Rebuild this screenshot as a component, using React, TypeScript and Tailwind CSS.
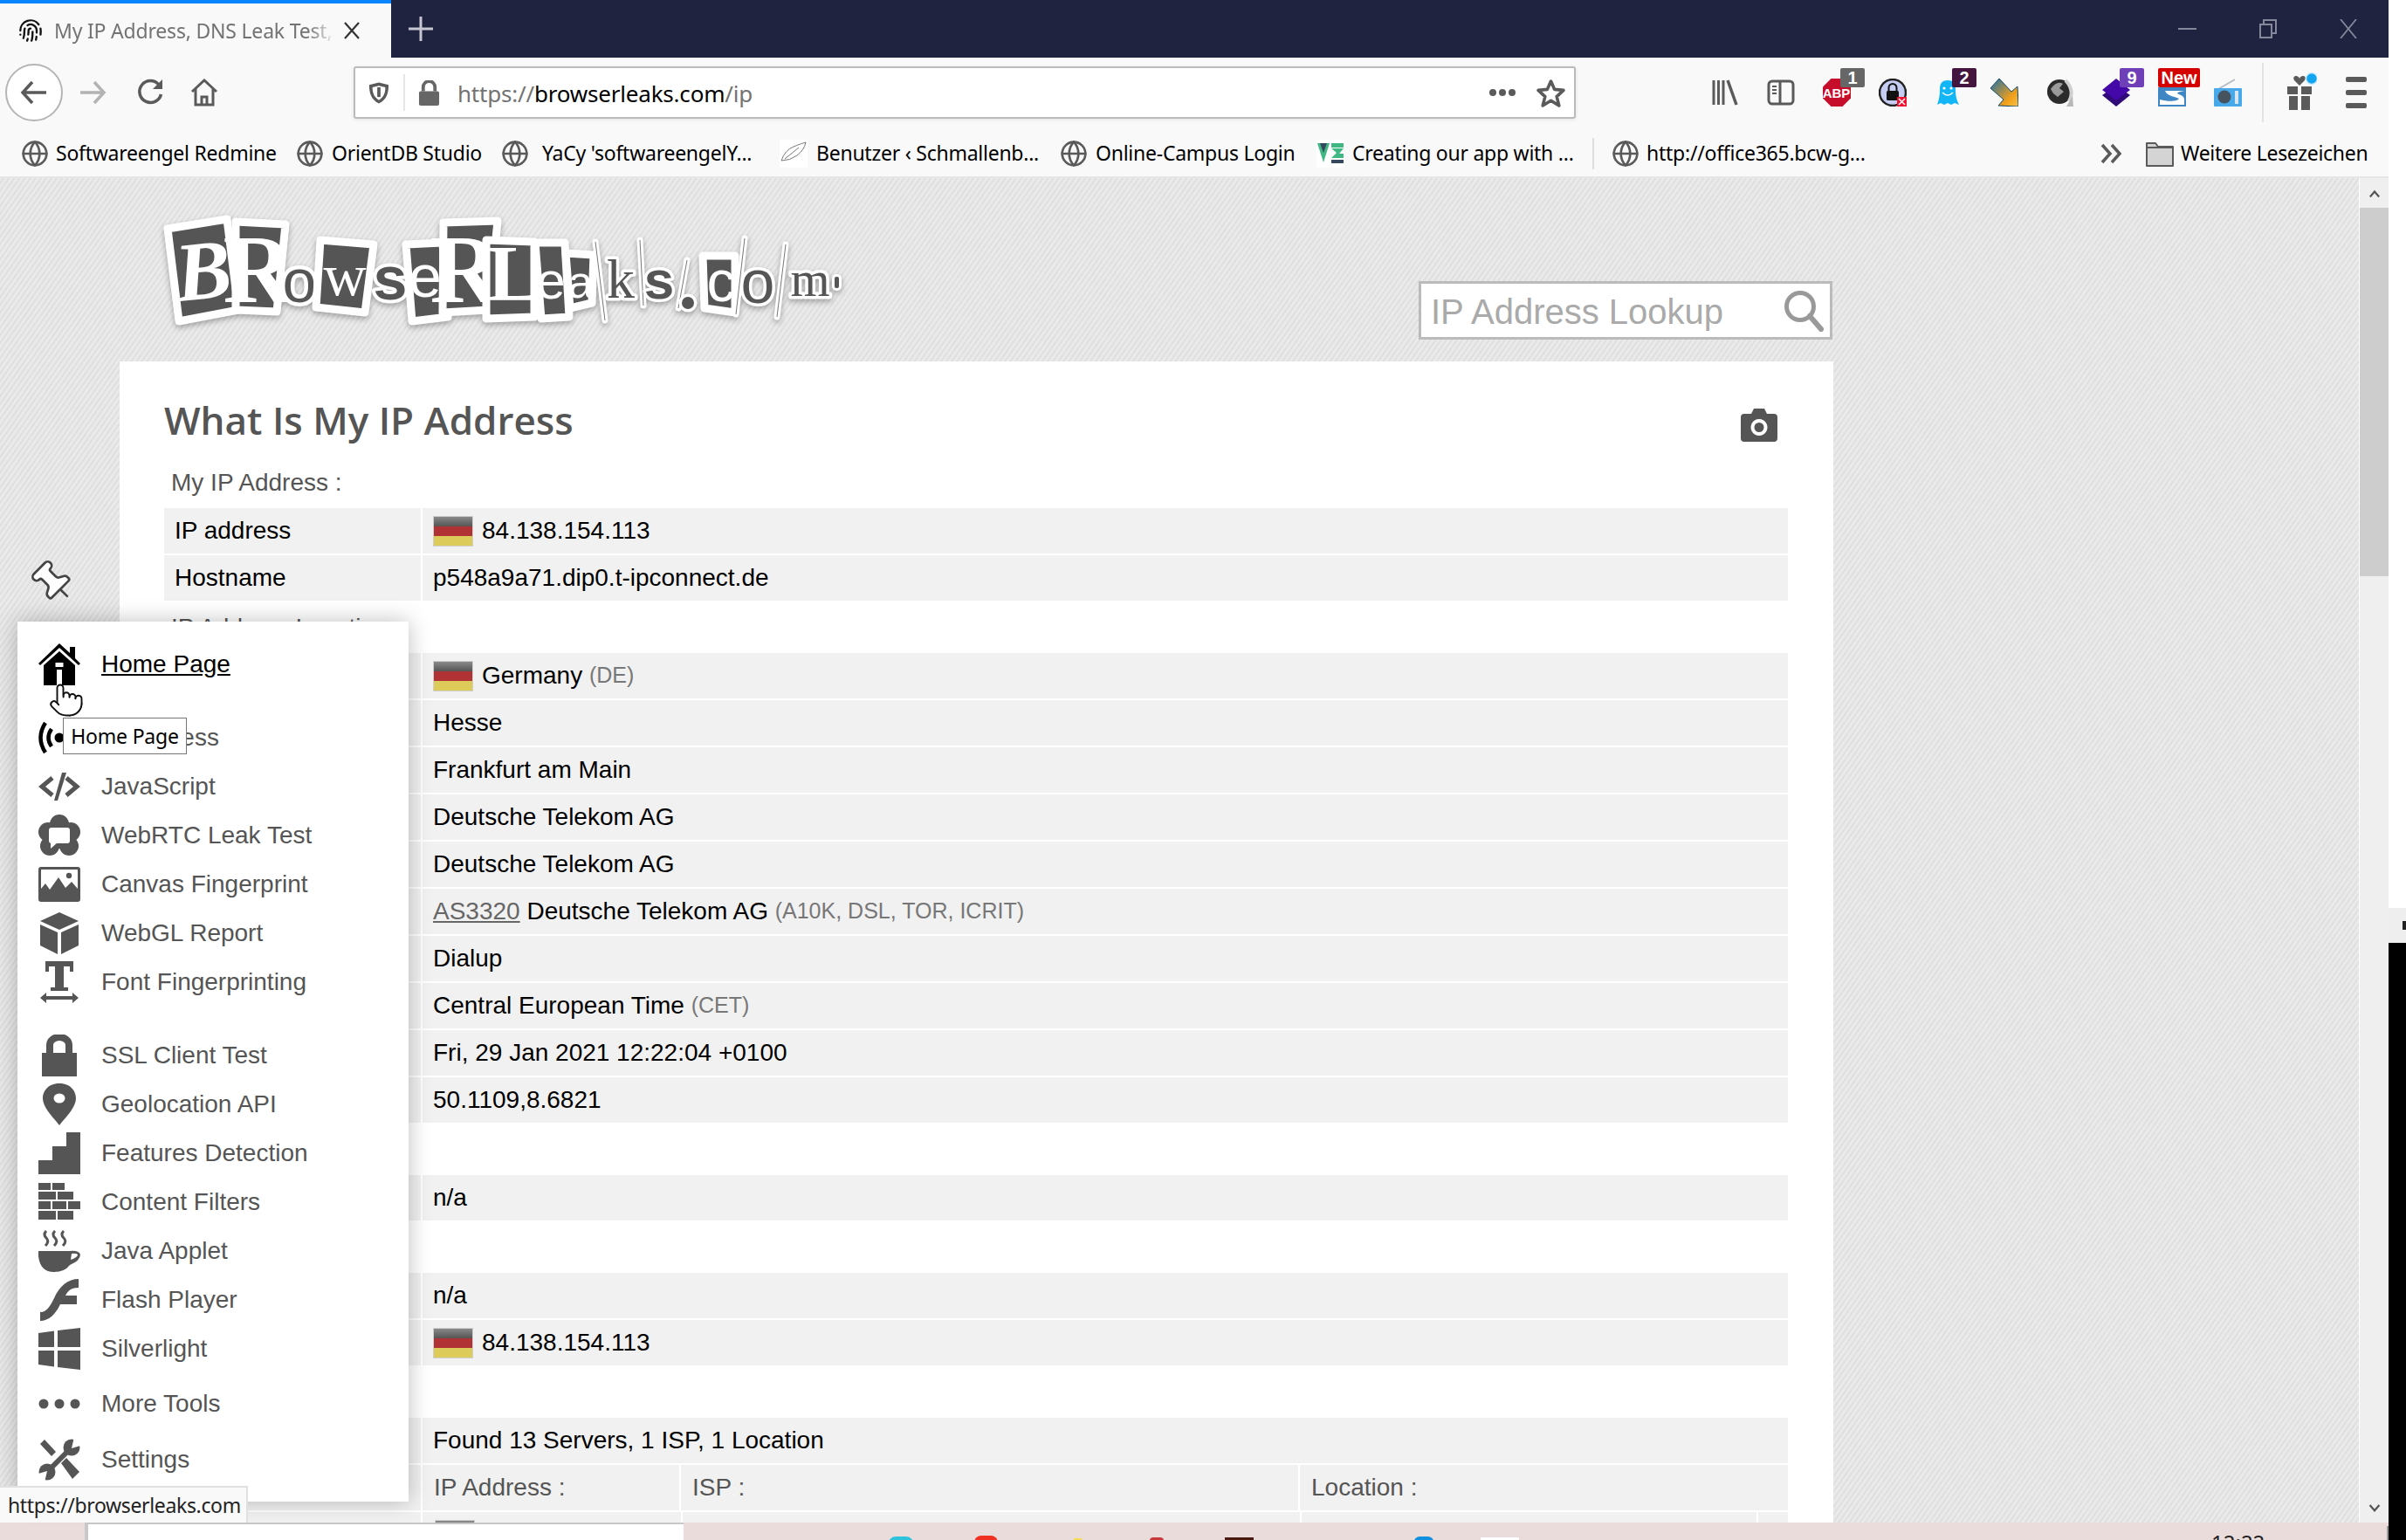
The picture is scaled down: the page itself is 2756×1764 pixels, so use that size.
import React from "react";
import { Fingerprint, Globe, Pin, Pointer } from "lucide-react";

const ui = "font-['Noto_Sans',sans-serif]";

function Flag() {
  return (
    <div className="w-[46px] h-[35px] border border-[#cfcfcf] flex flex-col shrink-0 mr-[10px]">
      <div className="flex-1 bg-gradient-to-b from-[#8a8a8a] to-[#555555]" />
      <div className="flex-1 bg-[#b03235]" />
      <div className="flex-1 bg-[#dccb58]" />
    </div>
  );
}

function Row({ k, children }: { k?: string; children: React.ReactNode }) {
  return (
    <div className="flex gap-[2px] h-[52px] mb-[2px] text-[28px] text-black">
      <div className="w-[294px] bg-[#f1f1f1] pl-[12px] flex items-center">{k}</div>
      <div className="flex-1 bg-[#f1f1f1] pl-[12px] flex items-center whitespace-pre">{children}</div>
    </div>
  );
}

function Label({ children }: { children?: React.ReactNode }) {
  return <div className="h-[58px] flex items-center pl-[8px] text-[28px] text-[#555]">{children}</div>;
}

function Small({ children }: { children: React.ReactNode }) {
  return <span className="text-[25px] text-[#777]">{children}</span>;
}

function Logo() {
  const box = (pts: string) => <polygon points={pts} fill="#555" stroke="#fff" strokeWidth="9" strokeLinejoin="round" />;
  const slip = (x1: number, y1: number, x2: number, y2: number) => (
    <g>
      <line x1={x1} y1={y1} x2={x2} y2={y2} stroke="#fff" strokeWidth="7" strokeLinecap="round" />
      <line x1={x1} y1={y1} x2={x2} y2={y2} stroke="#777" strokeWidth="1" />
    </g>
  );
  const ser = "Liberation Serif";
  const san = "Liberation Sans";
  const inv = (x: number, y: number, s: string, size: number, fam: string, weight: string = "normal", style: string = "normal", rot = 0) => (
    <text x={x} y={y} fontFamily={fam} fontSize={size} fontWeight={weight} fontStyle={style} fill="#fff" textAnchor="middle" transform={rot ? `rotate(${rot} ${x} ${y})` : undefined}>{s}</text>
  );
  const out = (x: number, y: number, s: string, size: number, fam: string, weight: string = "normal", sw = 8) => (
    <text x={x} y={y} fontFamily={fam} fontSize={size} fontWeight={weight} fill="#555" stroke="#fff" strokeWidth={sw} strokeLinejoin="round" textAnchor="middle" style={{ paintOrder: "stroke" }}>{s}</text>
  );
  return (
    <svg viewBox="170 230 800 150" className="w-[800px] h-[150px] shrink-0 ml-[170px] mt-[26px] drop-shadow-[0_3px_3px_rgba(0,0,0,0.3)]">
      {box("192,262 260,251 273,355 205,368")}
      {inv(236, 342, "B", 96, ser, "bold", "italic", -6)}
      {box("270,254 327,257 317,357 270,355")}
      {inv(296, 346, "R", 112, ser, "bold")}
      {out(343, 346, "o", 70, san, "normal", 9)}
      {box("367,275 428,280 418,358 362,352")}
      {inv(395, 338, "w", 68, ser)}
      {out(447, 343, "s", 70, san, "bold")}
      {box("465,280 507,278 513,363 472,368")}
      {inv(487, 340, "e", 68, san)}
      {box("508,255 570,253 560,355 507,358")}
      {inv(533, 346, "R", 112, ser, "bold")}
      {box("557,275 612,277 612,363 557,365")}
      {inv(589, 344, "L", 92, ser, "bold")}
      {box("613,278 647,278 652,363 620,365")}
      {inv(631, 342, "e", 60, san)}
      {box("648,290 680,292 678,347 653,353")}
      {inv(665, 341, "a", 52, san)}
      {slip(682, 277, 693, 367)}
      {out(711, 341, "k", 64, ser, "normal", 7)}
      {slip(733, 275, 737, 350)}
      {out(755, 342, "s", 62, san, "bold", 7)}
      {slip(787, 298, 777, 353)}
      <circle cx="788" cy="347" r="7" fill="#555" stroke="#fff" strokeWidth="7" style={{ paintOrder: "stroke" }} />
      {box("805,293 842,293 842,358 807,353")}
      {inv(826, 345, "c", 66, san)}
      {out(868, 347, "o", 70, san, "normal", 7)}
      {slip(853, 273, 843, 360)}
      {slip(900, 280, 890, 363)}
      {out(928, 339, "m", 58, ser, "normal", 7)}
      <rect x="956" y="317" width="5" height="13" rx="2" fill="#555" stroke="#fff" strokeWidth="6" style={{ paintOrder: "stroke" }} />
    </svg>
  );
}

function Ico({ children }: { children: React.ReactNode }) {
  return <svg viewBox="0 0 48 48" className="w-[48px] h-[48px] shrink-0" fill="#555">{children}</svg>;
}

const menuIcons: Record<string, React.ReactNode> = {
  home: (
    <Ico>
      <path fill="#000" d="M24 0 L36 11 V4 H42 V17 L48 23 L46 25 L24 5 L2 25 L0 23 Z" />
      <path fill="#000" fillRule="evenodd" d="M6 25 L24 9 L42 25 V48 H6 Z M19.5 22 h9 v5 h-9z M21 30 h6 v18 h-6 z" />
    </Ico>
  ),
  ip: (
    <Ico>
      <circle cx="24" cy="24" r="5.5" fill="#000" />
      <path d="M15 14 Q8 24 15 34 M8 7 Q-3 24 8 41 M33 14 Q40 24 33 34 M40 7 Q51 24 40 41" fill="none" stroke="#000" strokeWidth="4.5" />
    </Ico>
  ),
  js: (
    <Ico>
      <path d="M16 14 L4 24 L16 34" fill="none" stroke="#555" strokeWidth="5" />
      <path d="M32 14 L44 24 L32 34" fill="none" stroke="#555" strokeWidth="5" />
      <path d="M27 8 H32 L22 40 H18 Z" />
    </Ico>
  ),
  rtc: (
    <Ico>
      <circle cx="24" cy="11" r="11" />
      <circle cx="37" cy="20" r="11" />
      <circle cx="35" cy="36" r="11" />
      <circle cx="13" cy="36" r="11" />
      <circle cx="11" cy="20" r="11" />
      <circle cx="24" cy="25" r="14" />
      <rect x="12" y="15" width="24" height="18" rx="3" fill="#fff" />
      <polygon points="14,32 14,39 22,32" fill="#fff" />
    </Ico>
  ),
  canvas: (
    <Ico>
      <rect x="0" y="4" width="48" height="40" rx="3" />
      <path fill="#fff" d="M3 7 H45 V29 L38 21 L31 28 L23 16 L13 30 L8 23 L3 29 Z" />
      <circle cx="35" cy="14" r="3.2" />
    </Ico>
  ),
  cube: (
    <Ico>
      <polygon points="24,0 46,10 24,20 2,10" />
      <polygon points="2,14 22,23 22,48 2,38" />
      <polygon points="46,14 26,23 26,48 46,38" />
    </Ico>
  ),
  font: (
    <Ico>
      <path d="M8 0 H40 V12 H36 V6 H29 V30 H34 V34 H14 V30 H19 V6 H12 V12 H8Z" />
      <path d="M2 42 L9 36 V40 H39 V36 L46 42 L39 48 V44 H9 V48Z" />
    </Ico>
  ),
  lock: (
    <Ico>
      <rect x="4" y="21" width="40" height="27" />
      <path d="M13 22 V12 A11 9 0 0 1 35 12 V22" fill="none" stroke="#555" strokeWidth="8" />
    </Ico>
  ),
  geo: (
    <Ico>
      <path d="M24 0 C38 0 43 10 43 17 C43 28 30 40 24 48 C18 40 5 28 5 17 C5 10 10 0 24 0Z" />
      <ellipse cx="24" cy="17" rx="6.5" ry="5.5" fill="#fff" />
    </Ico>
  ),
  stairs: (
    <Ico>
      <path d="M32 0 H48 V48 H0 V32 H16 V16 H32 Z" />
    </Ico>
  ),
  bricks: (
    <Ico>
      <rect x="0" y="2" width="14" height="8" />
      <rect x="16" y="2" width="14" height="8" />
      <rect x="0" y="12" width="20" height="9" />
      <rect x="22" y="12" width="18" height="9" />
      <rect x="0" y="23" width="14" height="9" />
      <rect x="16" y="23" width="16" height="9" />
      <rect x="34" y="23" width="14" height="9" />
      <rect x="0" y="34" width="20" height="10" />
      <rect x="22" y="34" width="18" height="10" />
    </Ico>
  ),
  java: (
    <Ico>
      <path d="M9 1 Q5 5 9 9 Q13 13 8 18 M19 1 Q15 5 19 9 Q23 13 18 18 M29 1 Q25 5 29 9 Q33 13 28 18" fill="none" stroke="#555" strokeWidth="3" />
      <path fillRule="evenodd" d="M0 24 H36 Q46 23 48 28 Q48 35 36 40 Q30 48 18 48 Q2 48 0 30Z M38 27 Q45 26 45 29 Q43 32 37 34Z" />
    </Ico>
  ),
  flash: (
    <Ico>
      <path d="M46 0 V10 C36 10 33 15 31 19 H44 V29 H25 C20 40 12 48 2 48 V38 C10 38 14 30 18 22 C24 8 34 0 46 0Z" />
    </Ico>
  ),
  win: (
    <Ico>
      <path d="M0 6 L18 3.5 V22 H0Z M22 3 L48 0 V22 H22Z M0 26 H18 V44.5 L0 42Z M22 26 H48 V48 L22 45Z" />
    </Ico>
  ),
  dots: (
    <Ico>
      <circle cx="6" cy="24" r="5.5" />
      <circle cx="24" cy="24" r="5.5" />
      <circle cx="42" cy="24" r="5.5" />
    </Ico>
  ),
  tools: (
    <Ico>
      <polygon points="2,6 7,1 20,15 15,20" />
      <polygon points="26,28 32,22 47,38 39,46" />
      <line x1="10" y1="38" x2="38" y2="10" stroke="#555" strokeWidth="6" />
      <circle cx="38" cy="10" r="9.5" />
      <circle cx="10" cy="38" r="9.5" />
      <polygon points="38,11 41,-2 51,7" fill="#fff" />
      <polygon points="10,37 7,50 -3,41" fill="#fff" />
    </Ico>
  ),
};

function MenuItem({ icon, label, cls = "", hot = false }: { icon: string; label: string; cls?: string; hot?: boolean }) {
  return (
    <div className={`h-[56px] flex items-center pl-[24px] ${cls}`}>
      {menuIcons[icon]}
      <span className={`ml-[24px] text-[28px] ${hot ? "text-black underline" : "text-[#555]"}`}>{label}</span>
    </div>
  );
}

function Menu() {
  return (
    <div className="absolute left-[20px] top-[712px] w-[448px] h-[1008px] pt-[21px] bg-white shadow-[0_0_24px_rgba(0,0,0,0.25)] font-['Liberation_Sans',sans-serif]">
      <MenuItem icon="home" label="Home Page" hot />
      <MenuItem icon="ip" label="IP Address" cls="mt-[28px]" />
      <MenuItem icon="js" label="JavaScript" />
      <MenuItem icon="rtc" label="WebRTC Leak Test" />
      <MenuItem icon="canvas" label="Canvas Fingerprint" />
      <MenuItem icon="cube" label="WebGL Report" />
      <MenuItem icon="font" label="Font Fingerprinting" />
      <MenuItem icon="lock" label="SSL Client Test" cls="mt-[28px]" />
      <MenuItem icon="geo" label="Geolocation API" />
      <MenuItem icon="stairs" label="Features Detection" />
      <MenuItem icon="bricks" label="Content Filters" />
      <MenuItem icon="java" label="Java Applet" />
      <MenuItem icon="flash" label="Flash Player" />
      <MenuItem icon="win" label="Silverlight" />
      <MenuItem icon="dots" label="More Tools" cls="mt-[7px]" />
      <MenuItem icon="tools" label="Settings" cls="mt-[8px]" />
    </div>
  );
}

function Ext({ children, badge, badgeCls = "", w = "w-[28px]", left = "left-[20px]" }: { children: React.ReactNode; badge?: string; badgeCls?: string; w?: string; left?: string }) {
  return (
    <div className="relative w-[32px] h-[32px] shrink-0">
      <svg viewBox="0 0 32 32" className="w-[32px] h-[32px]">{children}</svg>
      {badge && (
        <span className={`absolute top-[-12px] ${left} ${w} h-[22px] rounded-[2px] text-white text-[20px] leading-[22px] font-bold text-center font-['Liberation_Sans',sans-serif] ${badgeCls}`}>{badge}</span>
      )}
    </div>
  );
}

function Toolbar() {
  return (
    <div className="h-[80px] bg-[#f9f9fa] flex items-center shrink-0">
      <div className="ml-[6px] w-[66px] h-[66px] rounded-full border-2 border-[#b5b5b5] bg-white flex items-center justify-center shrink-0">
        <svg viewBox="0 0 32 32" className="w-[32px] h-[32px]" fill="none" stroke="#5a5a5a" strokeWidth="3.5"><path d="M30 16 H3 M14 4 L3 16 L14 28" /></svg>
      </div>
      <svg viewBox="0 0 32 32" className="w-[32px] h-[32px] ml-[18px] shrink-0" fill="none" stroke="#b3b3b3" strokeWidth="3.5"><path d="M2 16 H29 M18 4 L29 16 L18 28" /></svg>
      <svg viewBox="0 0 32 32" className="w-[32px] h-[32px] ml-[34px] shrink-0" fill="none" stroke="#5a5a5a" strokeWidth="3.5"><path d="M26 7 A12.5 12.5 0 1 0 28.500 18" /><path d="M30 1 V12 H19 Z" fill="#5a5a5a" strokeWidth="0" /></svg>
      <svg viewBox="0 0 32 32" className="w-[32px] h-[32px] ml-[30px] shrink-0" fill="none" stroke="#5a5a5a" strokeWidth="3"><path d="M2 15 L16 2 L30 15" /><path d="M6 12 V30 H26 V12" /><path d="M13 30 V21 H19 V30" /></svg>
      <div className={`ml-[155px] w-[1400px] h-[60px] shrink-0 bg-white border-2 border-[#bbbbbb] rounded-[3px] shadow-[0_1px_4px_rgba(0,0,0,0.1)] flex items-center ${ui}`}>
        <svg viewBox="0 0 26 28" className="w-[24px] h-[27px] ml-[15px] shrink-0"><path d="M13 1 L25 4 C25 14 23 22 13 27 C3 22 1 14 1 4 Z" fill="#5a5a5a" /><path d="M13 5 L21 7 C21 14 19 19 13 23 C7 19 5 14 5 7 Z" fill="#fff" /><rect x="11" y="7" width="4" height="12" fill="#5a5a5a" /></svg>
        <div className="w-[2px] h-[42px] bg-[#e6e6e6] ml-[16px] shrink-0" />
        <svg viewBox="0 0 26 30" className="w-[25px] h-[29px] ml-[15px] shrink-0"><path d="M6 13 V8 A7 7 0 0 1 20 8 V13" fill="none" stroke="#666" strokeWidth="4" /><rect x="1" y="13" width="24" height="17" rx="2" fill="#666" /></svg>
        <span className="ml-[20px] text-[26px] tracking-[-0.2px] relative top-[1px] text-[#737373] whitespace-pre">https://<span className="text-black">browserleaks.com</span>/ip</span>
        <div className="ml-auto flex items-center gap-[3px] shrink-0">
          <span className="w-[8px] h-[8px] rounded-full bg-[#5a5a5a]" />
          <span className="w-[8px] h-[8px] rounded-full bg-[#5a5a5a]" />
          <span className="w-[8px] h-[8px] rounded-full bg-[#5a5a5a]" />
        </div>
        <svg viewBox="0 0 32 32" className="w-[33px] h-[33px] ml-[24px] mr-[10px] shrink-0" fill="none" stroke="#5a5a5a" strokeWidth="3.5" strokeLinejoin="round"><path d="M16 3 L20 12 L30 13 L22.5 20 L25 30 L16 24.5 L7 30 L9.5 20 L2 13 L12 12 Z" /></svg>
      </div>
      <div className="ml-[155px] flex items-center gap-[32px] shrink-0">
        <Ext>
          <path d="M3 2 V30 M8.5 2 V30 M14 2 V30" stroke="#5a5a5a" strokeWidth="3" />
          <path d="M19 2 L29 30" stroke="#5a5a5a" strokeWidth="3.5" />
        </Ext>
        <Ext>
          <rect x="2" y="3" width="28" height="26" rx="4" fill="none" stroke="#5a5a5a" strokeWidth="3" />
          <path d="M15 3 V29" stroke="#5a5a5a" strokeWidth="3" />
          <path d="M6 9 H11 M6 13 H11 M6 17 H11" stroke="#5a5a5a" strokeWidth="2" />
        </Ext>
        <Ext badge="1" badgeCls="bg-[#666666]">
          <polygon points="9.5,0 22.5,0 32,9.5 32,22.5 22.5,32 9.5,32 0,22.5 0,9.5" fill="#c70d2c" />
          <text x="15.5" y="22" textAnchor="middle" fontFamily="Liberation Sans" fontWeight="bold" fontSize="15" fill="#fff">ABP</text>
        </Ext>
        <Ext>
          <circle cx="16" cy="16" r="15" fill="#c5cdf2" stroke="#222" strokeWidth="2.5" />
          <rect x="9" y="14" width="14" height="11" rx="1.5" fill="#111" />
          <path d="M11.5 14 V10.5 A4.5 4.5 0 0 1 20.5 10.5 V14" fill="none" stroke="#111" strokeWidth="2" />
          <rect x="21" y="21" width="11" height="11" fill="#f01030" />
          <path d="M23 23 L30 30 M30 23 L23 30" stroke="#fff" strokeWidth="1.5" />
        </Ext>
        <Ext badge="2" badgeCls="bg-[#44163f]">
          <path d="M3 30 C5 24 6 20 6 12 C6 5 9 2 15 2 C21 2 24 5 24 12 C24 20 25 24 28 30 L23 28 L19 30 L15 28 L11 30 L7 28 Z" fill="#12b5f5" />
          <circle cx="11" cy="11" r="1.6" fill="#fff" />
          <circle cx="19" cy="11" r="1.6" fill="#fff" />
          <path d="M9 16 Q15 22 21 16" fill="none" stroke="#fff" strokeWidth="1.6" />
        </Ext>
        <Ext>
          <defs>
            <linearGradient id="ag" x1="0" y1="0" x2="1" y2="1">
              <stop offset="0" stopColor="#1a6fa8" />
              <stop offset="0.7" stopColor="#f29f1a" />
              <stop offset="1" stopColor="#f7c34a" />
            </linearGradient>
          </defs>
          <polygon points="0,11 10,0 24,15 31,9 32,32 9,31 15,24" fill="url(#ag)" stroke="#0e4a74" strokeWidth="1" />
        </Ext>
        <Ext>
          <circle cx="15" cy="15" r="14" fill="#2b2b2b" />
          <path d="M5 12 Q12 2 19 6 L15 11 L20 15 L13 21 L8 17 Z" fill="#9a9a9a" />
          <path d="M22 2 Q33 14 26 26" fill="none" stroke="#d0d0d0" strokeWidth="4" />
          <path d="M23 32 L30 20 L31 32 Z" fill="#b8b8b8" />
        </Ext>
        <Ext badge="9" badgeCls="bg-[#6f3fb8]">
          <polygon points="0,19 16,32 32,19 16,8" fill="#2f0a78" />
          <polygon points="16,0 32,13 16,25 0,13" fill="#4408a8" />
        </Ext>
        <Ext badge="New" w="w-[48px]" left="left-0" badgeCls="bg-[#d50000]">
          <rect x="0" y="10" width="32" height="22" fill="#3f86c4" />
          <path d="M2 30 V24 C12 27 22 26 24 23 C20 21 10 20 8 14 H30 C24 15 22 16 22 17 C26 19 30 20 30 24 V30 Z" fill="#fff" />
          <path d="M4 12 H28 V14 H4Z" fill="#3f86c4" />
        </Ext>
        <Ext>
          <path d="M5 12 L24 1" stroke="#b0b8c0" strokeWidth="1.6" />
          <rect x="0" y="11" width="32" height="21" rx="1" fill="#47a8ea" />
          <circle cx="12" cy="21" r="7.5" fill="#46525e" />
          <rect x="24" y="14" width="4" height="15" fill="#d7e6f0" />
        </Ext>
      </div>
      <div className="w-[2px] h-[68px] bg-[#e2e2e2] ml-[23px] shrink-0" />
      <svg viewBox="0 0 34 44" className="w-[34px] h-[44px] ml-[27px] shrink-0 relative top-[-2px]">
        <path d="M14 8 C12 3 5 5 8 10 L14 16 L20 10 C23 5 16 3 14 8 Z" fill="#5a5a5a" />
        <rect x="0" y="17" width="12" height="9" fill="#5a5a5a" />
        <rect x="16" y="17" width="12" height="9" fill="#5a5a5a" />
        <rect x="2" y="28" width="10" height="16" fill="#5a5a5a" />
        <rect x="16" y="28" width="10" height="16" fill="#5a5a5a" />
        <circle cx="28" cy="8" r="6.5" fill="#12a5f0" stroke="#cdeafa" strokeWidth="1.5" />
      </svg>
      <div className="ml-[33px] w-[24px] flex flex-col gap-[9px] shrink-0">
        <span className="h-[6px] rounded-[2px] bg-[#5a5a5a]" />
        <span className="h-[6px] rounded-[2px] bg-[#5a5a5a]" />
        <span className="h-[6px] rounded-[2px] bg-[#5a5a5a]" />
      </div>
    </div>
  );
}

function Book({ w, gap, label, icon }: { w: string; gap: string; label: string; icon?: React.ReactNode }) {
  return (
    <div className={`${w} shrink-0 flex items-center`}>
      {icon ?? <Globe size={32} color="#5a5a5a" strokeWidth={2} className="shrink-0" />}
      <span className={`${gap} text-[23px] tracking-[-0.25px] text-black whitespace-nowrap`}>{label}</span>
    </div>
  );
}

function Bookmarks() {
  return (
    <div className={`h-[56px] pt-[3px] bg-[#f9f9fa] flex items-center pl-[24px] shrink-0 ${ui}`}>
      <Book w="w-[315px]" gap="ml-[8px]" label="Softwareengel Redmine" />
      <Book w="w-[235px]" gap="ml-[9px]" label="OrientDB Studio" />
      <Book w="w-[319px]" gap="ml-[15px]" label="YaCy 'softwareengelY..." />
      <Book
        w="w-[321px]"
        gap="ml-[10px]"
        label="Benutzer ‹ Schmallenb..."
        icon={
          <svg viewBox="0 0 32 32" className="w-[32px] h-[32px] shrink-0 bg-white">
            <path d="M2 24 Q6 12 16 8 Q26 4 30 3 Q28 12 20 18 Q12 24 2 24 Z M6 22 L22 9" fill="none" stroke="#777" strokeWidth="1" />
          </svg>
        }
      />
      <Book w="w-[294px]" gap="ml-[9px]" label="Online-Campus Login" />
      <Book
        w="w-[316px]"
        gap="ml-[9px]"
        label="Creating our app with ..."
        icon={
          <svg viewBox="0 0 32 32" className="w-[32px] h-[32px] shrink-0 bg-white">
            <polygon points="1,4 15,4 8,26" fill="#41b883" />
            <polygon points="4,4 12,4 8,15" fill="#35495e" />
            <rect x="17" y="4" width="14" height="5" fill="#41b883" />
            <polygon points="17,10 31,10 26,16 31,16 31,21 17,21 23,15" fill="#41b883" />
            <rect x="17" y="23" width="14" height="4" fill="#35495e" />
          </svg>
        }
      />
      <div className="w-[2px] h-[36px] bg-[#dedede] shrink-0 mr-[20px]" />
      <Book w="w-[300px]" gap="ml-[8px]" label="http://office365.bcw-g..." />
      <svg viewBox="0 0 26 24" className="w-[26px] h-[24px] ml-[260px] shrink-0" fill="none" stroke="#5a5a5a" strokeWidth="3.5"><path d="M2 2 L11 12 L2 22 M13 2 L22 12 L13 22" /></svg>
      <svg viewBox="0 0 32 30" className="w-[32px] h-[30px] ml-[26px] shrink-0"><path d="M1 3 H11 L14 7 H31 V29 H1 Z" fill="#d4d4d4" stroke="#5a5a5a" strokeWidth="2" strokeLinejoin="round" /><path d="M1 8 H31" stroke="#5a5a5a" strokeWidth="2" /></svg>
      <span className="ml-[8px] text-[23px] tracking-[-0.3px] text-black whitespace-nowrap">Weitere Lesezeichen</span>
    </div>
  );
}

function Page() {
  return (
    <div className="flex-1 overflow-hidden bg-[repeating-linear-gradient(125deg,#ebebeb_0px,#e9e9e9_2px,#dcdcdc_3.5px,#e9e9e9_5px)] font-['Liberation_Sans',sans-serif]">
      <div className="h-[210px] flex">
        <Logo />
        <div className="ml-[655px] mt-[118px] w-[474px] h-[67px] shrink-0 border-[3px] border-[#bbbbbb] bg-white flex items-center pl-[11px]">
          <span className="text-[40px] relative top-[1px] text-[#aaaaaa] whitespace-nowrap">IP Address Lookup</span>
          <svg viewBox="0 0 46 48" className="w-[46px] h-[48px] ml-auto mr-[7px] shrink-0" fill="none" stroke="#999"><circle cx="19" cy="19" r="15.5" strokeWidth="5" /><path d="M30 30 L43 45" strokeWidth="6" strokeLinecap="round" /></svg>
        </div>
      </div>
      <div className="ml-[137px] w-[1963px] pl-[51px] pr-[52px] bg-white pb-[40px]">
        <div className="pt-[40px] pb-[14px] flex justify-between">
          <h1 className="h-[56px] leading-[54px] text-[44px] font-semibold text-[#555] font-['Open_Sans',sans-serif]">What Is My IP Address</h1>
          <svg viewBox="0 0 42 38" className="w-[42px] h-[38px] mt-[14px] mr-[12px]"><path fillRule="evenodd" fill="#555" d="M4 6 H12 L15 0 H27 L30 6 H38 A4 4 0 0 1 42 10 V34 A4 4 0 0 1 38 38 H4 A4 4 0 0 1 0 34 V10 A4 4 0 0 1 4 6 Z M21 12 A9.5 9.5 0 1 0 21.01 12 Z" /><circle cx="21" cy="21.500" r="5.500" fill="#555" /></svg>
        </div>
        <Label>My IP Address :</Label>
        <Row k="IP address"><Flag />84.138.154.113</Row>
        <Row k="Hostname">p548a9a71.dip0.t-ipconnect.de</Row>
        <Label>IP Address Location :</Label>
        <Row><Flag />Germany <Small>(DE)</Small></Row>
        <Row>Hesse</Row>
        <Row>Frankfurt am Main</Row>
        <Row>Deutsche Telekom AG</Row>
        <Row>Deutsche Telekom AG</Row>
        <Row><span className="underline text-[#666]">AS3320</span> Deutsche Telekom AG <Small>(A10K, DSL, TOR, ICRIT)</Small></Row>
        <Row>Dialup</Row>
        <Row>Central European Time <Small>(CET)</Small></Row>
        <Row>Fri, 29 Jan 2021 12:22:04 +0100</Row>
        <Row>50.1109,8.6821</Row>
        <Label />
        <Row>n/a</Row>
        <Label />
        <Row>n/a</Row>
        <Row><Flag />84.138.154.113</Row>
        <Label />
        <Row>Found 13 Servers, 1 ISP, 1 Location</Row>
        <div className="flex gap-[2px] h-[52px] mb-[2px] text-[28px] text-[#555]">
          <div className="w-[294px] bg-[#f1f1f1]" />
          <div className="w-[294px] bg-[#f1f1f1] pl-[13px] flex items-center">IP Address :</div>
          <div className="w-[707px] bg-[#f1f1f1] pl-[13px] flex items-center">ISP :</div>
          <div className="flex-1 bg-[#f1f1f1] pl-[13px] flex items-center">Location :</div>
        </div>
        <div className="flex gap-[2px] h-[52px] mb-[2px]">
          <div className="w-[294px] bg-[#f1f1f1]" />
          <div className="flex-1 bg-[#f1f1f1] flex">
            <div className="w-[1530px] flex gap-[2px] border-r-2 border-white">
              <div className="w-[294px] pl-[14px] pt-[9px]"><Flag /></div>
              <div className="w-[707px] border-l-2 border-white" />
              <div className="flex-1 border-l-2 border-white" />
            </div>
          </div>
        </div>
      </div>
    </div>
  );
}

function Scrollbar() {
  return (
    <div className="w-[34px] bg-[#efefef] border-l border-white flex flex-col shrink-0">
      <div className="h-[34px] flex items-center justify-center pt-[2px]">
        <svg viewBox="0 0 14 10" className="w-[12px] h-[10px]" fill="none" stroke="#555" strokeWidth="2.5"><path d="M1 9 L7 2 L13 9" /></svg>
      </div>
      <div className="h-[422px] bg-[#cdcdcd]" />
      <div className="flex-1 flex items-end justify-center pb-[12px]">
        <svg viewBox="0 0 14 10" className="w-[16px] h-[9px]" fill="none" stroke="#555" strokeWidth="2.5"><path d="M1 1 L7 8 L13 1" /></svg>
      </div>
    </div>
  );
}

function Taskbar() {
  return (
    <div className="h-[20px] bg-[#ebdcdc] flex shrink-0 overflow-hidden relative">
      <div className="w-[97px] shrink-0" />
      <div className="w-[686px] shrink-0 bg-white border-t-2 border-l-4 border-[#c8c8c8]" />
      <div className="w-[28px] h-[8px] mt-[16px] ml-[235px] rounded-t-full bg-[#2cc4dc] shrink-0" />
      <div className="w-[27px] h-[8px] mt-[15px] ml-[70px] rounded-t-full bg-[#f03020] shrink-0" />
      <div className="w-[9px] h-[3px] mt-[18px] ml-[87px] bg-[#f5dc50] shrink-0" />
      <div className="w-[16px] h-[4px] mt-[17px] ml-[78px] rounded-t-full bg-[#c83838] shrink-0" />
      <div className="w-[33px] h-[4px] mt-[17px] ml-[70px] bg-[#4a1a10] shrink-0" />
      <div className="w-[22px] h-[6px] mt-[16px] ml-[184px] rounded-t-full bg-[#1090e0] shrink-0" />
      <div className="w-[44px] h-[5px] mt-[17px] ml-[54px] bg-white shrink-0" />
      <span className={`ml-[793px] mt-[8px] text-[24px] leading-[30px] text-[#222] shrink-0 ${ui}`}>12:22</span>
      <div className="w-[2px] h-[16px] mt-[4px] ml-[140px] bg-[#9a9a9a] shrink-0" />
    </div>
  );
}

export default function App() {
  return (
    <div className="relative w-[2756px] h-[1764px] overflow-hidden flex bg-white">
      <div className="w-[2736px] flex flex-col shrink-0">
        <div className="h-[66px] bg-[#20233f] flex shrink-0">
          <div className={`w-[448px] bg-[#f9f9fa] border-t-4 border-[#0a84ff] flex items-center pl-[21px] shrink-0 ${ui}`}>
            <Fingerprint size={28} color="#111" strokeWidth={2} className="shrink-0" />
            <span className="ml-[13px] w-[323px] overflow-hidden whitespace-nowrap text-[23px] tracking-[-0.2px] text-[#737373] [mask-image:linear-gradient(to_right,black_90%,transparent)]">My IP Address, DNS Leak Test, WebRTC</span>
            <svg viewBox="0 0 20 20" className="w-[20px] h-[20px] ml-[8px] shrink-0" stroke="#333" strokeWidth="2.2"><path d="M2 1 L18 19 M18 1 L2 19" /></svg>
          </div>
          <svg viewBox="0 0 28 28" className="w-[28px] h-[28px] ml-[20px] mt-[19px] shrink-0" stroke="#c5c6d2" strokeWidth="3"><path d="M14 0 V28 M0 14 H28" /></svg>
          <div className="ml-auto flex items-center pr-[36px] gap-[72px]">
            <div className="w-[21px] h-[2px] bg-[#85879b]" />
            <svg viewBox="0 0 20 22" className="w-[20px] h-[22px]" fill="none" stroke="#85879b" strokeWidth="2"><path d="M1 6 H14 V21 H1 Z M5 6 V1 H19 V16 H14" /></svg>
            <svg viewBox="0 0 20 22" className="w-[20px] h-[22px]" stroke="#85879b" strokeWidth="1.8"><path d="M1 0 L19 22 M19 0 L1 22" /></svg>
          </div>
        </div>
        <Toolbar />
        <Bookmarks />
        <div className="h-[2px] bg-[#e6e6e6] shrink-0" />
        <div className="flex-1 flex min-h-0">
          <Page />
          <Scrollbar />
        </div>
        <Taskbar />
      </div>
      <div className="flex-1 flex flex-col">
        <div className="h-[1040px] bg-white" />
        <div className="h-[40px] bg-[#eeeeee] flex items-center justify-end"><div className="w-[4px] h-[10px] bg-[#222]" /></div>
        <div className="flex-1 bg-black" />
      </div>

      <Pin size={54} color="#444" fill="#fff" strokeWidth={1.2} className="absolute left-[34px] top-[640px] -rotate-45" />
      <Menu />
      <Pointer size={42} color="#111" fill="#fff" strokeWidth={1.1} className="absolute left-[55px] top-[781px]" />
      <div className={`absolute left-[72px] top-[822px] w-[142px] h-[42px] bg-white border border-[#767676] flex items-center justify-center text-[23px] tracking-[-0.2px] text-black ${ui}`}>Home Page</div>
      <div className={`absolute left-0 top-[1702px] w-[284px] h-[42px] bg-[#f9f9fa] border-t-2 border-r-2 border-[#e0e0e0] flex items-center pl-[9px] text-[23px] tracking-[-0.35px] text-[#222] ${ui}`}>https://browserleaks.com</div>
    </div>
  );
}
